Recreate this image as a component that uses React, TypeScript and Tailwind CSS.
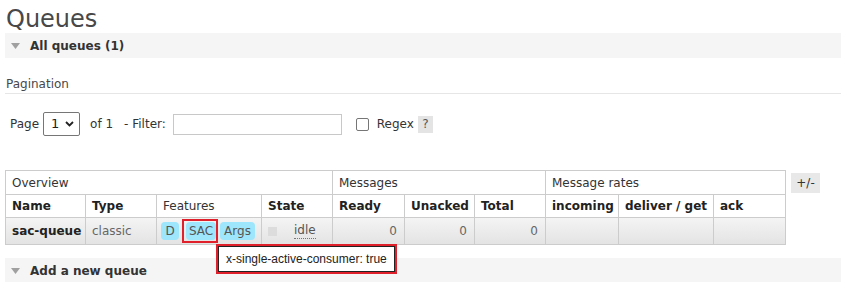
import React from 'react';

const font = { fontFamily: '"DejaVu Sans", Verdana, sans-serif' };
const tipFont = { fontFamily: '"Liberation Sans", Arial, sans-serif' };

const Triangle = () => (
  <svg width="9" height="6" viewBox="0 0 9 6" className="shrink-0">
    <path d="M0 0 H9 L4.5 6 Z" fill="#a0a0a0" />
  </svg>
);

const SectionBar = ({ label }: { label: string }) => (
  <div className="h-[25px] bg-[#f5f5f5] flex items-center pl-[6px] gap-[10px]">
    <Triangle />
    <span className="text-[12px] font-bold text-[#333]">{label}</span>
  </div>
);

const Badge = ({ children, className = '' }: { children: React.ReactNode; className?: string }) => (
  <span className={`relative inline-flex items-center justify-center h-[18px] px-[3px] rounded-[4px] bg-[#9ee6fb] text-[#555] text-[12px] ${className}`}>
    {children}
  </span>
);

const cols = [80, 71, 105, 71, 72, 70, 71, 73, 95, 72];

export default function App() {
  return (
    <div className="w-[841px] h-[282px] overflow-hidden bg-white pl-[5px] text-[#484848]" style={font}>
      <h1 className="h-[33px] text-[24px] leading-[38px] font-normal text-[#484848] pl-[1px]">Queues</h1>

      <SectionBar label="All queues (1)" />

      <div className="mt-[15px] h-[21px] flex items-center pt-[2px] pl-[1px] text-[12px] text-[#484848] border-b border-[#e6e6e6]">
        Pagination
      </div>

      <div className="mt-[18px] h-[24px] flex items-center text-[12px] text-[#333]">
        <span className="ml-[5px]">Page</span>
        <div className="ml-[4px] w-[37px] h-[24px] border border-[#767676] rounded-[2px] flex items-center justify-between pl-[7px] pr-[5px] bg-white">
          <span className="text-[13px] text-[#222]">1</span>
          <svg width="9" height="6" viewBox="0 0 9 6">
            <path d="M1 1 L4.5 4.5 L8 1" fill="none" stroke="#222" strokeWidth="1.8" />
          </svg>
        </div>
        <span className="ml-[10px]">of 1</span>
        <span className="ml-[11px]">- Filter:</span>
        <div className="ml-[7px] w-[169px] h-[21px] border border-[#c8c8c8] bg-white" />
        <div className="ml-[14px] w-[13px] h-[13px] border border-[#767676] rounded-[2px] bg-white" />
        <span className="ml-[8px]">Regex</span>
        <span className="ml-[4px] w-[15px] h-[17px] bg-[#e4e4e4] flex items-center justify-center text-[#555]">?</span>
      </div>

      <div className="mt-[34px] flex items-start">
        <table className="border-collapse table-fixed text-[12px]" style={{ width: 780 }}>
          <colgroup>
            {cols.map((w, i) => (
              <col key={i} style={{ width: w }} />
            ))}
          </colgroup>
          <thead>
            <tr className="h-[24px]">
              <th colSpan={4} className="border border-[#cccccc] font-normal text-left pl-[6px] text-[#333]">Overview</th>
              <th colSpan={3} className="border border-[#cccccc] font-normal text-left pl-[6px] text-[#333]">Messages</th>
              <th colSpan={3} className="border border-[#cccccc] font-normal text-left pl-[6px] text-[#333]">Message rates</th>
            </tr>
            <tr className="h-[23px] text-[#222]">
              <th className="border border-[#cccccc] text-left pl-[6px]">Name</th>
              <th className="border border-[#cccccc] text-left pl-[6px]">Type</th>
              <th className="border border-[#cccccc] text-left pl-[6px] font-normal text-[#333]">Features</th>
              <th className="border border-[#cccccc] text-left pl-[6px]">State</th>
              <th className="border border-[#cccccc] text-left pl-[6px]">Ready</th>
              <th className="border border-[#cccccc] text-left pl-[6px]">Unacked</th>
              <th className="border border-[#cccccc] text-left pl-[6px]">Total</th>
              <th className="border border-[#cccccc] text-left pl-[6px]">incoming</th>
              <th className="border border-[#cccccc] text-left pl-[6px]">deliver / get</th>
              <th className="border border-[#cccccc] text-left pl-[6px]">ack</th>
            </tr>
          </thead>
          <tbody>
            <tr className="h-[27px] bg-gradient-to-b from-[#f4f4f4] to-[#e3e3e3]">
              <td className="border border-[#cccccc] pl-[6px] font-bold text-[#222]">sac-queue</td>
              <td className="border border-[#cccccc] pl-[6px] text-[#666]">classic</td>
              <td className="border border-[#cccccc] pl-[4px] relative">
                <div className="flex items-center">
                  <Badge className="w-[18px]">D</Badge>
                  <Badge className="ml-[7px] w-[30px]">
                    SAC
                    <span className="absolute -left-[4px] -right-[2px] -top-[3px] -bottom-[3px] border-2 border-[#e0202a]" />
                  </Badge>
                  <Badge className="ml-[4px] w-[35px]">Args</Badge>
                </div>
                <div className="absolute left-[59px] top-[26px] z-10 border-2 border-[#e0202a] bg-white">
                  <div className="border border-[#222] bg-white h-[26px] px-[7px] flex items-center text-[12px] text-[#222] whitespace-nowrap" style={tipFont}>
                    x-single-active-consumer: true
                  </div>
                </div>
              </td>
              <td className="border border-[#cccccc] pl-[6px]">
                <div className="flex items-center">
                  <span className="w-[9px] h-[9px] bg-[#dcdcdc] inline-block" />
                  <span className="ml-[17px] text-[#555] border-b border-dotted border-[#777] leading-[15px]">idle</span>
                </div>
              </td>
              <td className="border border-[#cccccc] text-right pr-[7px] text-[#666]">0</td>
              <td className="border border-[#cccccc] text-right pr-[7px] text-[#666]">0</td>
              <td className="border border-[#cccccc] text-right pr-[7px] text-[#666]">0</td>
              <td className="border border-[#cccccc]" />
              <td className="border border-[#cccccc]" />
              <td className="border border-[#cccccc]" />
            </tr>
          </tbody>
        </table>
        <div className="ml-[5px] mt-[3px] w-[29px] h-[20px] bg-[#e8e8e8] flex items-center justify-center text-[12px] text-[#333]">
          +/-
        </div>
      </div>

      <div className="mt-[13px]">
        <SectionBar label="Add a new queue" />
      </div>
    </div>
  );
}
